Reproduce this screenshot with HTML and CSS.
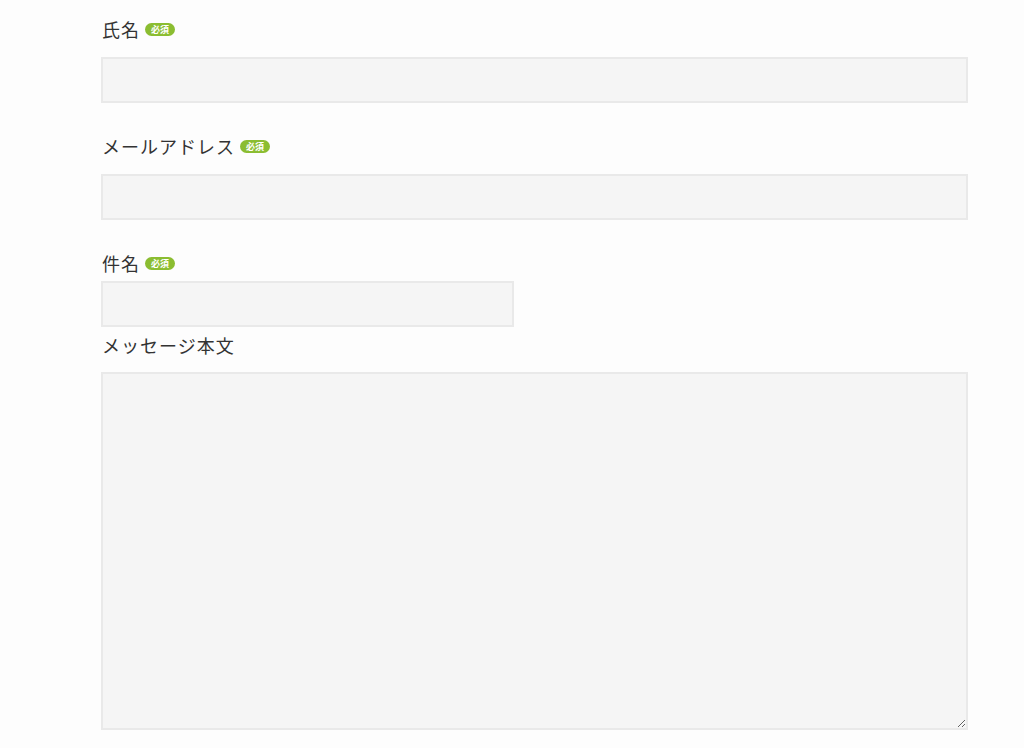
FILE: index.html
```html
<!DOCTYPE html>
<html lang="ja">
<head>
<meta charset="utf-8">
<title>お問い合わせ</title>
<link rel="stylesheet" href="styles.css">
</head>
<body>
<form class="form">
  <div class="field">
    <label class="label">氏名<span class="badge">必須</span></label>
    <input class="input" type="text">
  </div>
  <div class="field">
    <label class="label">メールアドレス<span class="badge">必須</span></label>
    <input class="input" type="email">
  </div>
  <div class="field field--tight">
    <label class="label">件名<span class="badge">必須</span></label>
    <input class="input input--half" type="text">
  </div>
  <div class="field field--last">
    <label class="label">メッセージ本文</label>
    <textarea class="textarea"></textarea>
  </div>
</form>
</body>
</html>
```

FILE: styles.css
```css
html, body {
  margin: 0;
  padding: 0;
  background: #fdfdfd;
}
body {
  font-family: "Noto Sans CJK JP", "Noto Sans", sans-serif;
  color: #333;
}
.form {
  width: 867px;
  margin-left: 101px;
  padding-top: 16px;
}
.field {
  display: flex;
  flex-direction: column;
  align-items: flex-start;
  margin-bottom: 30px;
}
.field--tight {
  margin-bottom: 5px;
}
.label {
  box-sizing: border-box;
  font-size: 18px;
  letter-spacing: 1px;
  line-height: 26px;
  height: 30px;
  padding: 0 0 4px 1px;
  margin-bottom: 11px;
  display: flex;
  align-items: center;
}
.field--tight .label {
  margin-bottom: 1px;
}
.field--last .label {
  margin-bottom: 10px;
}
.badge {
  display: inline-block;
  margin-left: 5px;
  background: #8bbd31;
  color: #fff;
  font-size: 9px;
  font-weight: 700;
  letter-spacing: 0;
  line-height: 13px;
  height: 13px;
  padding: 0 6px;
  border-radius: 7px;
  margin-top: 1px;
}
.input, .textarea {
  box-sizing: border-box;
  width: 867px;
  background: #f5f5f5;
  border: 2px solid #e9e9e9;
  border-radius: 0;
  margin: 0;
  font: inherit;
  letter-spacing: 0;
}
.input {
  height: 46px;
}
.input--half {
  width: 413px;
}
.textarea {
  height: 358px;
  resize: vertical;
}
```
